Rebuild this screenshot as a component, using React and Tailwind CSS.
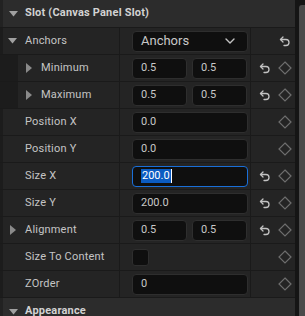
import React from "react";

const font = { fontFamily: "Roboto, 'Noto Sans', sans-serif" };

function Undo({ className = "" }) {
  return (
    <svg width="12" height="11" viewBox="0 0 24 22" fill="none" stroke="#c2c2c2" strokeWidth="2.6" strokeLinecap="round" strokeLinejoin="round" className={className}>
      <path d="M8 2 3 7l5 5" />
      <path d="M3 7h11a6 6 0 0 1 0 12h-4" />
    </svg>
  );
}

function Diamond() {
  return (
    <svg width="14" height="14" viewBox="0 0 14 14" fill="none">
      <polygon points="7,1 13,7 7,13 1,7" stroke="#6e6e6e" strokeWidth="1.2" />
    </svg>
  );
}

function TriDown() {
  return (
    <svg width="9" height="6" viewBox="0 0 9 6">
      <polygon points="0,0 9,0 4.5,5.5" fill="#a0a0a0" />
    </svg>
  );
}

function TriRight() {
  return (
    <svg width="6" height="10" viewBox="0 0 6 10">
      <polygon points="0,0 6,5 0,10" fill="#8a8a8a" />
    </svg>
  );
}

function Input({ value, w = "w-[116px]", focused = false }) {
  if (focused) {
    return (
      <div className={`${w} h-[21px] rounded-[4px] border border-[#1a6fd8] bg-[#0f0f0f] flex items-center pl-[8px] text-[11px]`}>
        <span className="bg-[#0b5cc2] text-white px-[1px] leading-[14px]">{value}</span>
        <span className="w-[1px] h-[14px] bg-white"></span>
      </div>
    );
  }
  return (
    <div className={`${w} h-[21px] rounded-[4px] border border-[#2e2e2e] bg-[#0f0f0f] flex items-center pl-[8px] text-[11px] text-[#c8c8c8]`}>
      {value}
    </div>
  );
}

function Row({ label, indent = false, tri = null, value, reset = false, diamond = true, resetOnly = false }) {
  return (
    <div className="flex h-[27px] shrink-0 border-b border-[#1a1a1a] bg-[#242424]">
      <div className="flex w-[120px] border-r border-[#1a1a1a]">
        <div className={`${indent ? "w-[18px]" : "w-[3px]"} bg-[#1c1c1c] shrink-0`}></div>
        <div className="flex items-center flex-1 relative">
          {tri === "down" && (
            <span className="absolute left-[5px] top-[10px] flex"><TriDown /></span>
          )}
          {tri === "right" && (
            <span className={`absolute ${indent ? "left-[8px]" : "left-[7px]"} top-[8px] flex`}><TriRight /></span>
          )}
          <span className={`${indent ? "pl-[23px]" : "pl-[22px]"} text-[11px] text-[#c4c4c4] tracking-[0.2px]`}>{label}</span>
        </div>
      </div>
      <div className="flex items-center w-[131px] border-r border-[#1a1a1a] pl-[12px]">
        {value}
      </div>
      <div className="flex items-center flex-1 pl-[4px]">
        <div className="w-[20px] flex justify-center">{reset && !resetOnly && <Undo />}</div>
        <div className="w-[20px] flex justify-center">
          {resetOnly ? <Undo /> : diamond && <Diamond />}
        </div>
      </div>
    </div>
  );
}

function Dual({ a, b }) {
  return (
    <div className="flex gap-[5px]">
      <Input value={a} w="w-[55px]" />
      <Input value={b} w="w-[55px]" />
    </div>
  );
}

function Header({ title }) {
  return (
    <div className="flex h-[28px] shrink-0 border-b border-[#1a1a1a] bg-[#2c2c2c]">
      <div className="w-[3px] bg-[#222222]"></div>
      <div className="flex items-center relative flex-1">
        <span className="absolute left-[6px] top-[11px] flex"><TriDown /></span>
        <span className="pl-[22px] text-[11px] font-bold text-[#d2d2d2] tracking-[0.2px]">{title}</span>
      </div>
    </div>
  );
}

export default function App() {
  return (
    <div className="w-[305px] h-[316px] overflow-hidden flex bg-[#1a1a1a]" style={font}>
      <div className="w-[295px] flex flex-col shrink-0">
        <Header title="Slot (Canvas Panel Slot)" />
        <Row
          label="Anchors"
          tri="down"
          resetOnly
          value={
            <div className="w-[116px] h-[21px] rounded-[4px] border border-[#2e2e2e] bg-[#0f0f0f] flex items-center justify-between pl-[8px] pr-[12px] text-[13px] text-[#c8c8c8]">
              <span>Anchors</span>
              <svg width="10" height="6" viewBox="0 0 10 6" fill="none" stroke="#c2c2c2" strokeWidth="1.4" strokeLinecap="round" strokeLinejoin="round">
                <path d="M1 1l4 4 4-4" />
              </svg>
            </div>
          }
        />
        <Row label="Minimum" indent tri="right" reset value={<Dual a="0.5" b="0.5" />} />
        <Row label="Maximum" indent tri="right" reset value={<Dual a="0.5" b="0.5" />} />
        <Row label="Position X" value={<Input value="0.0" />} />
        <Row label="Position Y" value={<Input value="0.0" />} />
        <Row label="Size X" reset value={<Input value="200.0" focused />} />
        <Row label="Size Y" reset value={<Input value="200.0" />} />
        <Row label="Alignment" tri="right" reset value={<Dual a="0.5" b="0.5" />} />
        <Row
          label="Size To Content"
          value={<div className="w-[17px] h-[17px] rounded-[3px] border border-[#2e2e2e] bg-[#0f0f0f]"></div>}
        />
        <Row label="ZOrder" value={<Input value="0" />} />
        <Header title="Appearance" />
      </div>
      <div className="flex-1 flex justify-end bg-[#151515]">
        <div className="w-[6px] mt-[5px] rounded-tl-[3px] bg-[#4a4a4a]"></div>
      </div>
    </div>
  );
}
